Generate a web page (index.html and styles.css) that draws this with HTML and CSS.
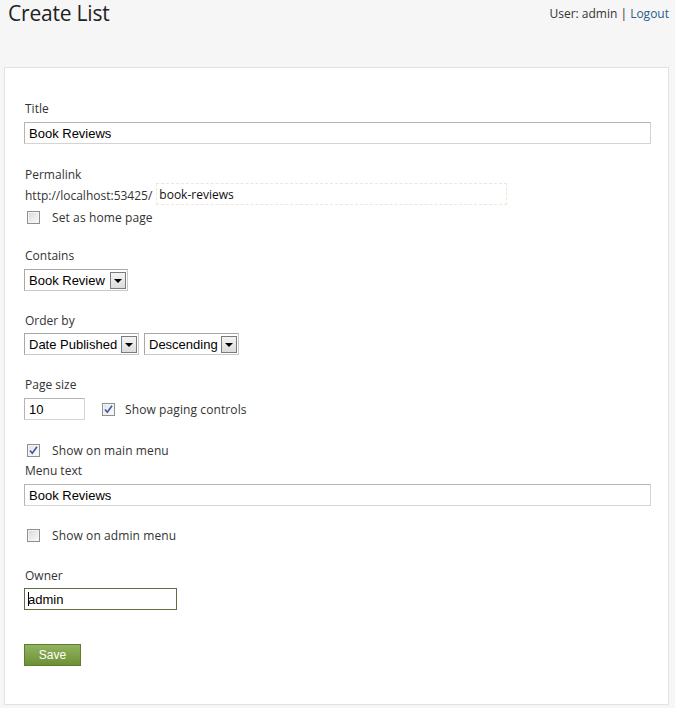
FILE: index.html
```html
<!DOCTYPE html>
<html lang="en">
<head>
<meta charset="utf-8">
<title>Create List</title>
<link rel="stylesheet" href="styles.css">
</head>
<body>
<header class="top">
  <h1 class="page-title">Create List</h1>
  <div class="user">User: admin | <a href="#" class="logout">Logout</a></div>
</header>
<main class="panel">
  <div class="label l-title">Title</div>
  <input class="text wide" type="text" value="Book Reviews">

  <div class="label l-perma">Permalink</div>
  <div class="perma-row">
    <span class="perma-base">http://localhost:53425/</span>
    <span class="slug">book-reviews</span>
  </div>
  <div class="check-row r-home">
    <span class="cb"></span>
    <span class="cb-text">Set as home page</span>
  </div>

  <div class="label l-contains">Contains</div>
  <div class="sel-row">
    <div class="select s-contains"><span class="sel-val">Book Review</span><span class="arrow"></span></div>
  </div>

  <div class="label l-order">Order by</div>
  <div class="sel-row">
    <div class="select s-date"><span class="sel-val">Date Published</span><span class="arrow"></span></div>
    <div class="select s-dir"><span class="sel-val">Descending</span><span class="arrow"></span></div>
  </div>

  <div class="label l-size">Page size</div>
  <div class="size-row">
    <input class="text small" type="text" value="10">
    <span class="cb checked"><svg viewBox="0 0 11 11" width="11" height="11"><path d="M2 5.5 L4.3 8.3 L9 1.8" fill="none" stroke="#3f57a0" stroke-width="1.6"/></svg></span>
    <span class="cb-text">Show paging controls</span>
  </div>

  <div class="check-row r-main">
    <span class="cb checked"><svg viewBox="0 0 11 11" width="11" height="11"><path d="M2 5.5 L4.3 8.3 L9 1.8" fill="none" stroke="#3f57a0" stroke-width="1.6"/></svg></span>
    <span class="cb-text">Show on main menu</span>
  </div>
  <div class="label l-menu">Menu text</div>
  <input class="text wide" type="text" value="Book Reviews">

  <div class="check-row r-admin">
    <span class="cb"></span>
    <span class="cb-text">Show on admin menu</span>
  </div>

  <div class="label l-owner">Owner</div>
  <div class="owner-wrap">
    <input class="text owner" type="text" value="admin">
    <span class="caret"></span>
  </div>

  <button class="save" type="button">Save</button>
</main>
</body>
</html>
```
FILE: styles.css
```css
html, body {
  margin: 0;
  padding: 0;
  background: #f6f6f6;
}
body {
  font-family: "Open Sans", "Noto Sans", sans-serif;
  color: #333;
  width: 675px;
  height: 708px;
  overflow: hidden;
}
.top {
  display: flex;
  justify-content: space-between;
  align-items: flex-start;
  height: 67px;
  padding: 0 6px 0 8px;
}
.page-title {
  margin: 0;
  font-weight: normal;
  font-size: 21px;
  line-height: 26px;
  color: #222;
  letter-spacing: -0.2px;
}
.user {
  font-size: 12px;
  line-height: 16px;
  margin-top: 6px;
  color: #333;
}
.logout {
  color: #2a5d8a;
  text-decoration: none;
}
.panel {
  margin: 0 6px 0 4px;
  background: #fff;
  border: 1px solid #e2e2e2;
  padding: 32px 19px 38px 19px;
  display: flex;
  flex-direction: column;
  align-items: flex-start;
}
.label {
  font-size: 12px;
  line-height: 16px;
  padding-top: 1px;
  margin-left: 1px;
  color: #333;
}
.l-title { margin-bottom: 5px; }
.l-perma { margin-top: 22px; margin-bottom: 0; }
.l-contains { margin-top: 22px; margin-bottom: 5px; }
.l-order { margin-top: 21px; margin-bottom: 4px; }
.l-size { margin-top: 21px; margin-bottom: 5px; }
.l-menu { margin-top: 4px; margin-bottom: 5px; }
.l-owner { margin-top: 24px; margin-bottom: 4px; }

.text {
  box-sizing: border-box;
  height: 22px;
  margin: 0;
  border: 1px solid #b4b4b4;
  border-right-color: #d4d4d4;
  border-bottom-color: #d4d4d4;
  padding: 0 4px;
  font-family: "Liberation Sans", Arial, sans-serif;
  font-size: 13px;
  color: #000;
  background: #fff;
  outline: none;
}
.wide { width: 627px; }
.small { width: 61px; }
.owner {
  width: 153px;
  border: 1px solid #5d6f3e;
  padding-left: 3px;
}
.owner-wrap {
  position: relative;
  display: flex;
}
.caret {
  position: absolute;
  left: 4px;
  top: 4px;
  width: 1px;
  height: 14px;
  background: #000;
}

.perma-row {
  display: flex;
  align-items: center;
  font-size: 12px;
  margin-left: 1px;
}
.perma-base { color: #333; padding-top: 2px; }
.slug {
  box-sizing: border-box;
  width: 351px;
  height: 22px;
  margin-left: 4px;
  border: 1px dashed #ebe8d6;
  padding: 3px 2px 0;
  line-height: 16px;
  font-size: 12px;
  color: #111;
}

.check-row {
  display: flex;
  align-items: center;
  height: 16px;
  margin-left: 3px;
}
.r-home { margin-top: 4px; }
.r-main { margin-top: 22px; }
.r-admin { margin-top: 21px; }
.cb {
  box-sizing: border-box;
  width: 13px;
  height: 13px;
  border: 1px solid #8e8f8f;
  background: linear-gradient(135deg, #d6d6d6 0%, #ececec 55%, #fafafa 100%);
  box-shadow: inset 0 0 0 1px #f4f4f4;
  display: inline-flex;
  align-items: center;
  justify-content: center;
  flex: none;
}
.cb.checked {
  background: linear-gradient(135deg, #dfe3ea 0%, #f2f2f2 60%, #fbfbfb 100%);
}
.cb-text {
  font-size: 12px;
  margin-left: 12px;
  color: #333;
  line-height: 16px;
  padding-top: 2px;
  letter-spacing: 0.1px;
}

.sel-row {
  display: flex;
  gap: 5px;
}
.select {
  box-sizing: border-box;
  height: 22px;
  border: 1px solid #a8a8a8;
  border-right-color: #c9c9c9;
  border-bottom-color: #c9c9c9;
  display: flex;
  align-items: center;
  padding: 0 1px 0 4px;
  font-family: "Liberation Sans", Arial, sans-serif;
  font-size: 13px;
  color: #000;
  background: #fff;
}
.sel-val { flex: 1; white-space: nowrap; }
.arrow {
  box-sizing: border-box;
  width: 16px;
  height: 17px;
  margin-left: 2px;
  border: 1px solid #7b7b7b;
  background: linear-gradient(#f4f4f4, #dcdcdc);
  position: relative;
  flex: none;
}
.arrow::after {
  content: "";
  position: absolute;
  left: 3px;
  top: 6px;
  border-left: 4px solid transparent;
  border-right: 4px solid transparent;
  border-top: 4px solid #000;
}
.s-contains { width: 104px; }
.s-date { width: 115px; }
.s-dir { width: 95px; }

.size-row {
  display: flex;
  align-items: center;
}
.size-row .cb { margin-left: 17px; }
.size-row .cb-text { margin-left: 10px; }

.save {
  margin-top: 34px;
  box-sizing: border-box;
  width: 57px;
  height: 22px;
  border: 1px solid #5e7b2f;
  background: linear-gradient(#93b35f, #6c9036);
  color: #fff;
  font-family: "Liberation Sans", Arial, sans-serif;
  font-size: 12px;
  padding: 0;
  cursor: pointer;
}
```
